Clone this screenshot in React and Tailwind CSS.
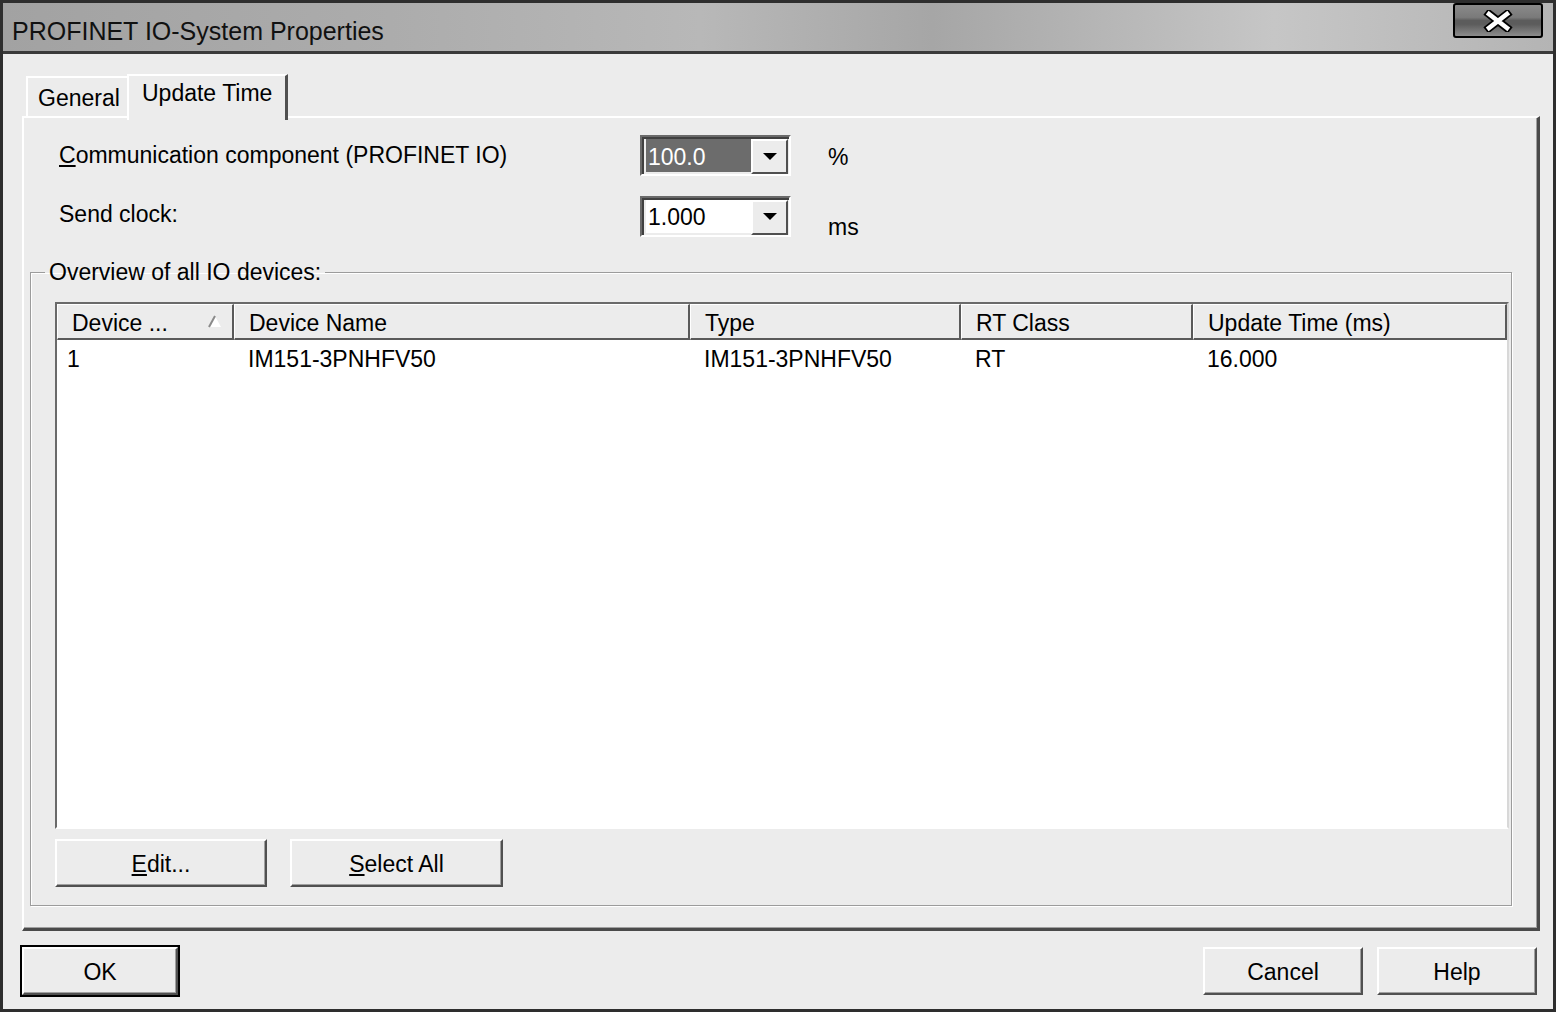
import React from "react";

const raised =
  "border-2 border-t-white border-l-white border-r-[#505050] border-b-[#505050] shadow-[inset_-1px_-1px_0_#a0a0a0] bg-[#ececec]";

function DropArrow() {
  return (
    <svg width="14" height="8" viewBox="0 0 14 8">
      <path d="M0 0 H14 L7 7 Z" fill="#000" />
    </svg>
  );
}

function Combo({ value, selected }) {
  return (
    <div className="w-[151px] h-[41px] flex border-2 border-t-[#6a6a6a] border-l-[#6a6a6a] border-r-white border-b-white shadow-[inset_2px_2px_0_#404040]">
      <div className="flex-1 flex items-center pl-[4px] pt-[2px] pb-[2px]">
        <div
          className={
            selected
              ? "h-full flex-1 flex items-center bg-[#6c6c6c] text-white pl-[2px] pt-[3px]"
              : "h-full flex-1 flex items-center bg-white pl-[2px] pt-[3px]"
          }
        >
          {value}
        </div>
      </div>
      <div className="w-[37px] h-[35px] mt-[2px] mr-[1px] flex items-center justify-center border-2 border-t-white border-l-white border-r-[#505050] border-b-[#505050] bg-[#ececec]">
        <DropArrow />
      </div>
    </div>
  );
}

function Button({ children, w, className = "" }) {
  return (
    <button className={`${w} h-[48px] flex items-center justify-center pt-[2px] ${raised} ${className}`}>
      {children}
    </button>
  );
}

function HeaderCell({ w, children }) {
  return (
    <div
      className={`${w} h-full flex items-center pl-[14px] pt-[3px] border-t border-l border-t-white border-l-white border-r-2 border-b-2 border-r-[#5a5a5a] border-b-[#5a5a5a]`}
    >
      {children}
    </div>
  );
}

const columns = [
  { w: "w-[177px]", label: "Device ..." },
  { w: "w-[456px]", label: "Device Name" },
  { w: "w-[271px]", label: "Type" },
  { w: "w-[232px]", label: "RT Class" },
  { w: "w-[314px]", label: "Update Time (ms)" },
];

const rows = [["1", "IM151-3PNHFV50", "IM151-3PNHFV50", "RT", "16.000"]];

export default function App() {
  return (
    <div className="w-[1556px] h-[1012px] flex flex-col bg-[#ececec] border-[3px] border-[#2e2e2e] overflow-hidden text-[23px] leading-none text-black font-['Liberation_Sans',Arial,sans-serif]">
      {/* title bar */}
      <div className="h-[51px] shrink-0 flex items-start justify-between bg-[linear-gradient(90deg,#a2a2a2_0%,#acacac_25%,#b8b8b8_45%,#a6a6a6_60%,#c6c6c6_82%,#b4b4b4_100%)] border-b-[3px] border-[#3a3a3a]">
        <div className="pl-[9px] pt-[16px] text-[25px] text-[#111]">PROFINET IO-System Properties</div>
        <div className="mr-[10px] w-[90px] h-[35px] flex items-center justify-center rounded-[3px] border-2 border-black bg-[linear-gradient(180deg,#8a8a8a_0%,#7a7a7a_40%,#5c5c5c_50%,#5c5c5c_62%,#8c8c8c_100%)]">
          <svg width="30" height="22" viewBox="0 0 30 22">
            <path d="M6 4 L24 18 M24 4 L6 18" stroke="#000" strokeWidth="8" strokeLinecap="square" />
            <path d="M6 4 L24 18 M24 4 L6 18" stroke="#fff" strokeWidth="4.5" strokeLinecap="square" />
          </svg>
        </div>
      </div>

      {/* tabs */}
      <div className="mt-[18px] pl-[23px] flex items-end h-[46px] shrink-0 relative z-10">
        <div className="w-[101px] h-[40px] flex items-center pl-[10px] pt-[2px] border-t-2 border-l-2 border-white bg-[#ececec] mb-[2px]">
          General
        </div>
        <div className="w-[161px] h-[46px] flex items-center pl-[13px] pb-[9px] border-t-2 border-l-2 border-white border-r-[3px] border-r-[#505050] bg-[#ececec] -mb-[2px]">
          Update Time
        </div>
      </div>

      {/* tab panel */}
      <div className="ml-[19px] w-[1518px] h-[815px] shrink-0 -mt-[2px] border-t-2 border-l-2 border-white border-r-[3px] border-b-[3px] border-r-[#4a4a4a] border-b-[#4a4a4a] shadow-[inset_-1px_-1px_0_#a0a0a0] pt-[17px]">
        <div className="pl-[35px] flex items-center h-[41px]">
          <div className="w-[581px]">
            <span className="underline underline-offset-2">C</span>ommunication component (PROFINET IO)
          </div>
          <Combo value="100.0" selected />
          <div className="ml-[37px] mt-[4px]">%</div>
        </div>
        <div className="pl-[35px] mt-[19px] flex items-center h-[42px]">
          <div className="w-[581px] -mt-[4px]">Send clock:</div>
          <Combo value="1.000" />
          <div className="ml-[37px] mt-[22px]">ms</div>
        </div>

        {/* group box */}
        <fieldset className="ml-[6px] mt-[21px] w-[1482px] h-[648px] border border-[#9c9c9c] shadow-[inset_1px_1px_0_#fff,1px_1px_0_#fff] pl-[24px] pt-[16px] pb-[16px] m-0">
          <legend className="-ml-[10px] px-[4px] leading-[28px]">Overview of all IO devices:</legend>

          <div className="w-[1454px] h-[527px] flex flex-col bg-white border-2 border-t-[#6a6a6a] border-l-[#6a6a6a] border-r-[#d8d8d8] border-b-white">
            <div className="h-[36px] flex bg-[#ececec]">
              {columns.map((c, i) => (
                <HeaderCell key={c.label} w={c.w}>
                  {i === 0 ? (
                    <div className="flex items-center w-full pr-[10px] justify-between">
                      <span>{c.label}</span>
                      <svg width="15" height="13" viewBox="0 0 15 13" className="-mt-[3px]">
                        <path d="M8 1 L14 12 H2 Z" fill="#fff" />
                        <path d="M8 1 L2 12" stroke="#8a8a8a" strokeWidth="2" />
                      </svg>
                    </div>
                  ) : (
                    c.label
                  )}
                </HeaderCell>
              ))}
            </div>
            {rows.map((r) => (
              <div key={r[0]} className="h-[36px] flex items-center pt-[2px]">
                {r.map((cell, i) => (
                  <div key={i} className={`${columns[i].w} ${i === 0 ? "pl-[10px]" : "pl-[14px]"}`}>
                    {cell}
                  </div>
                ))}
              </div>
            ))}
          </div>

          <div className="mt-[10px] flex gap-[23px]">
            <Button w="w-[212px]">
              <span>
                <span className="underline underline-offset-2">E</span>dit...
              </span>
            </Button>
            <Button w="w-[213px]">
              <span>
                <span className="underline underline-offset-2">S</span>elect All
              </span>
            </Button>
          </div>
        </fieldset>
      </div>

      {/* bottom buttons */}
      <div className="mt-[14px] pl-[17px] pr-[16px] flex items-center">
        <div className="border-2 border-black">
          <Button w="w-[156px]" className="h-[44px]">OK</Button>
        </div>
        <div className="flex-1" />
        <Button w="w-[160px]">Cancel</Button>
        <Button w="w-[160px]" className="ml-[14px]">Help</Button>
      </div>
    </div>
  );
}
